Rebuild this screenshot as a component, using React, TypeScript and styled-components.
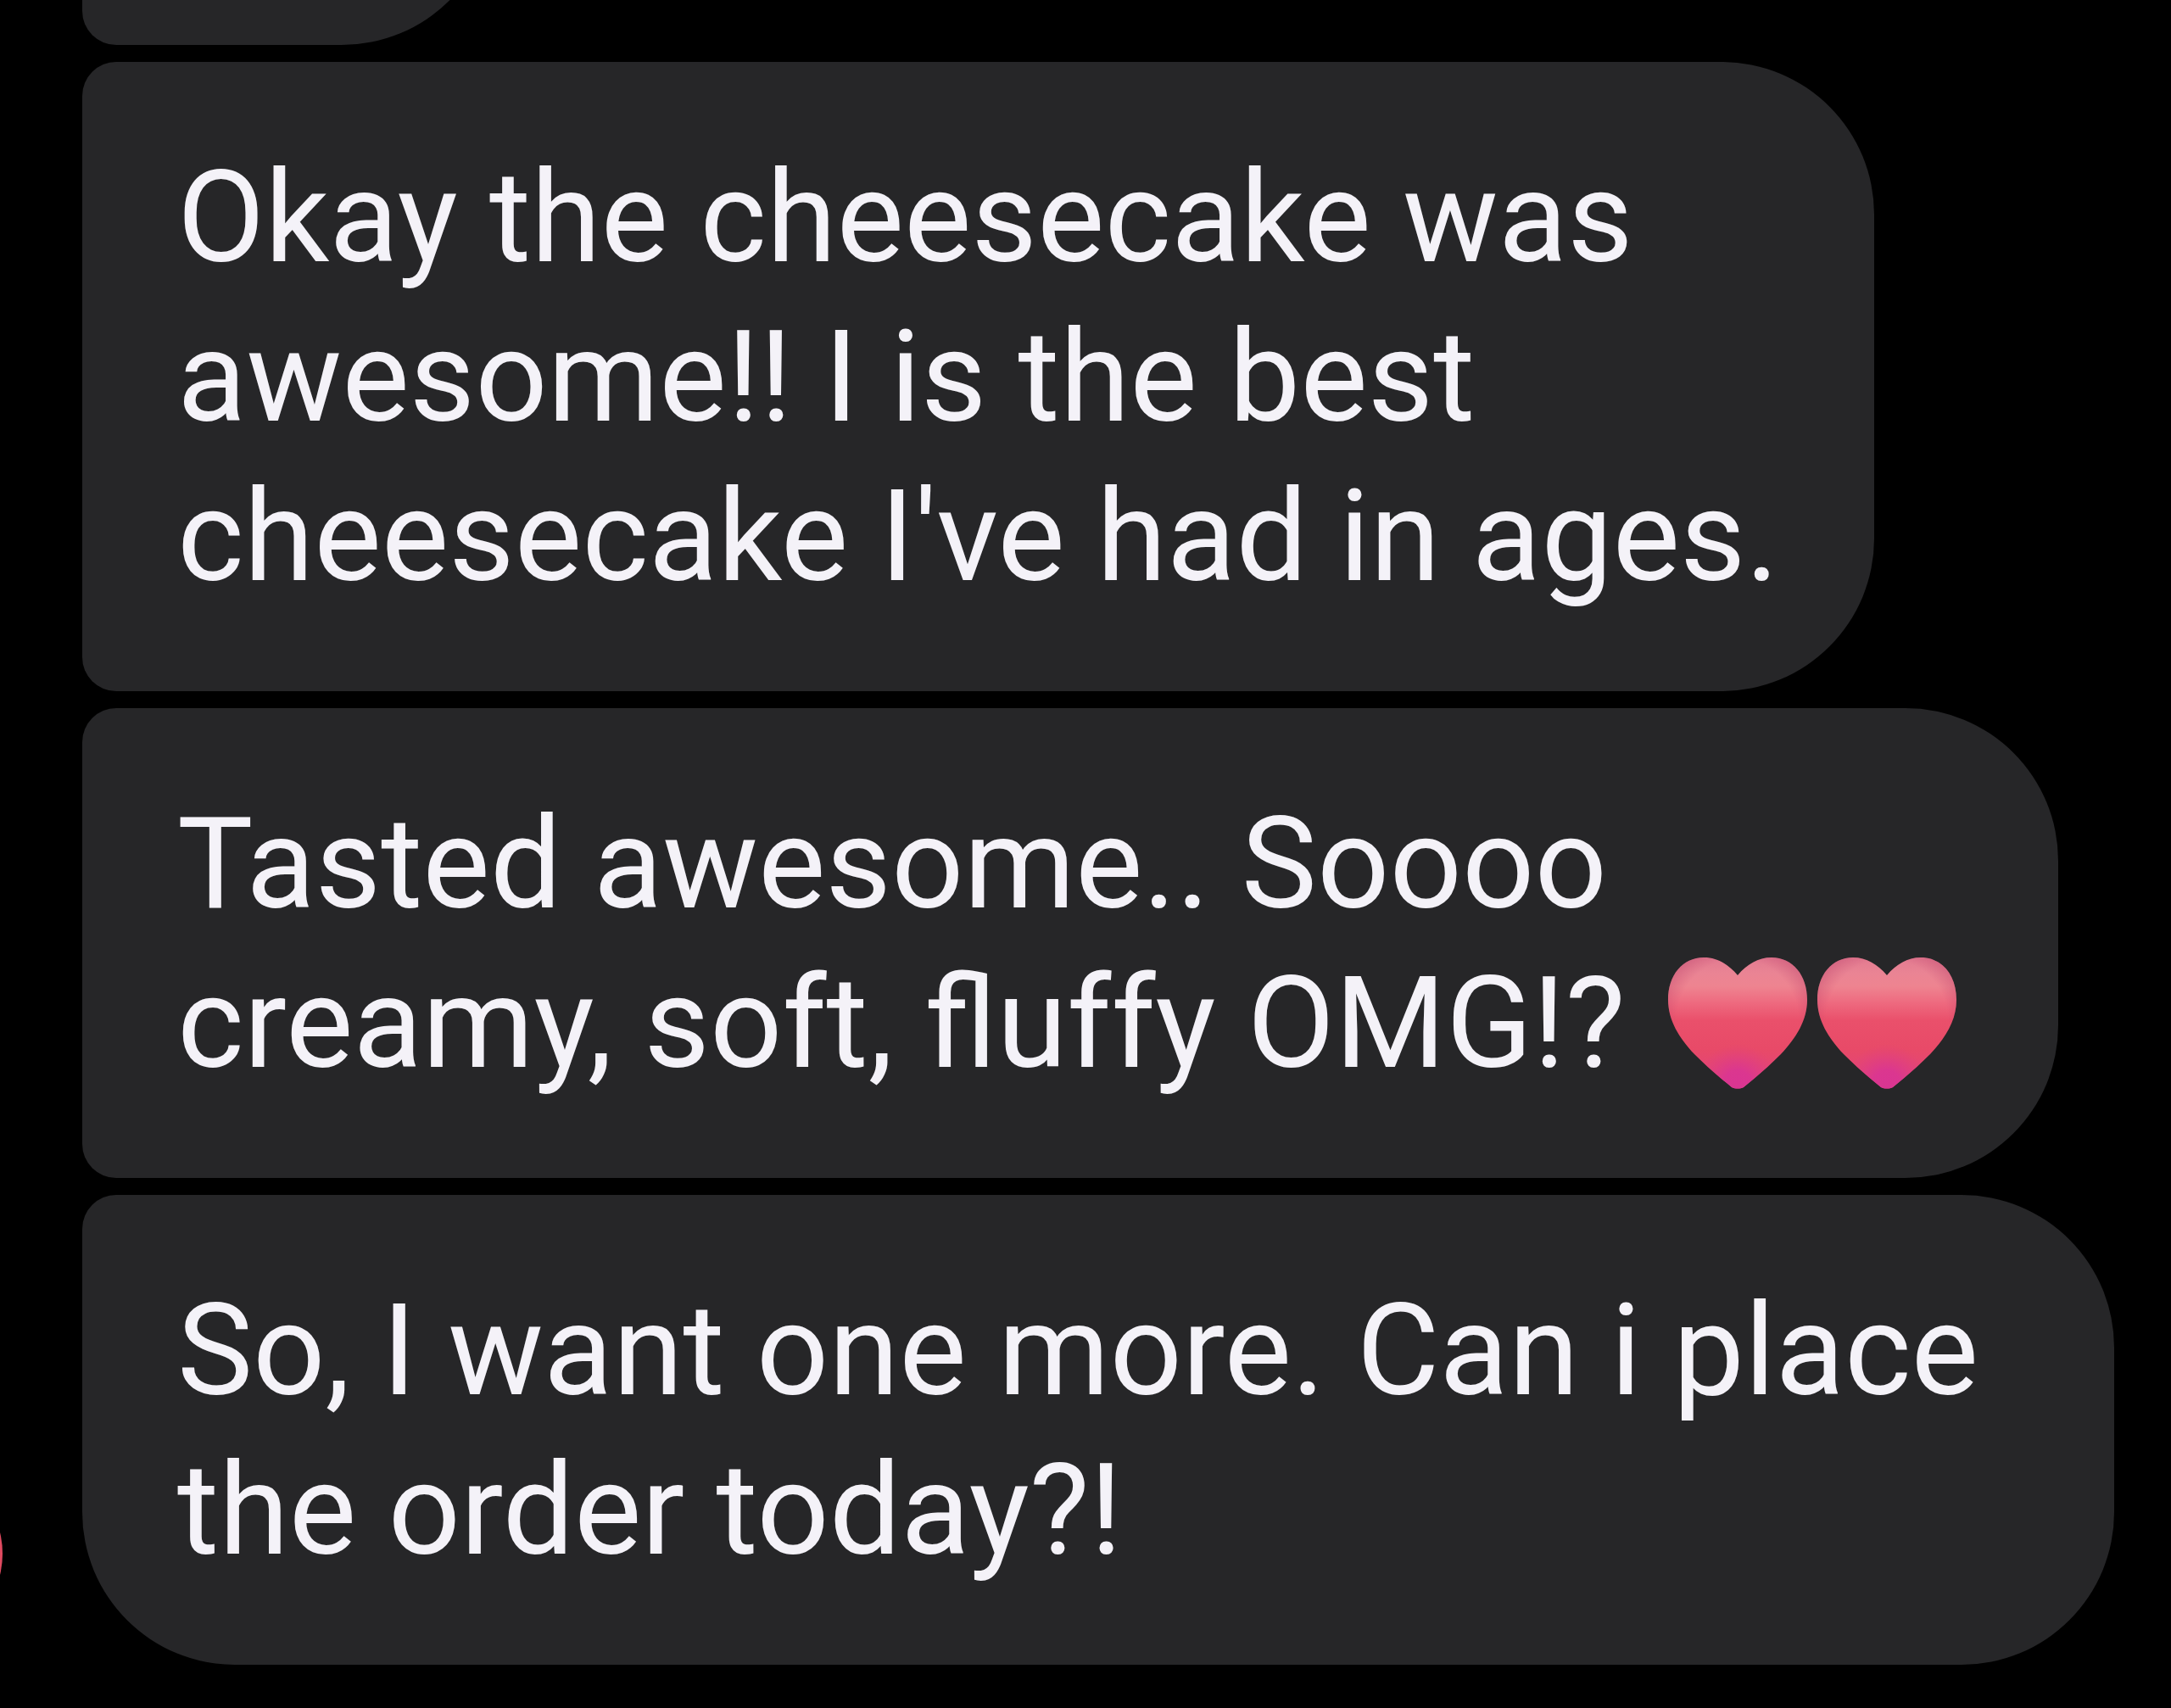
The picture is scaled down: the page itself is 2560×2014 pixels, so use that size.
import React from "react";
import styled, { createGlobalStyle } from "styled-components";

const GlobalStyle = createGlobalStyle`
  *, *::before, *::after { box-sizing: border-box; }
  html, body { margin: 0; background: #000; }
`;

const Thread = styled.main`
  position: relative;
  display: flex;
  flex-direction: column;
  justify-content: flex-end;
  align-items: flex-start;
  gap: 20px;
  height: 100vh;
  padding: 0 52px 51px 97px;
  overflow: hidden;
  background: #000;
  color: #f4f2f8;
  font-family: Roboto, "Liberation Sans", sans-serif;
  font-size: 150px;
  line-height: 188px;
`;

const Bubble = styled.article<{ $last?: boolean; $minWidth?: number }>`
  flex: none;
  max-width: 100%;
  min-width: ${(p) => p.$minWidth ?? 486}px;
  padding: 90px 112px 88px;
  border-radius: 40px 180px 180px ${(p) => (p.$last ? "180px" : "40px")};
  background: #262628;
`;

const Message = styled.p`
  margin: 0;
  min-height: 188px;
  white-space: break-spaces;
`;

const Emoji = styled.span`
  margin-left: 7px;
  white-space: nowrap;
`;

const HeartIcon = styled.svg`
  display: inline-block;
  width: 176px;
  height: 156px;
  vertical-align: -27px;
`;

const Avatar = styled.span`
  position: absolute;
  left: -209px;
  bottom: 76px;
  width: 212px;
  height: 212px;
  border-radius: 50%;
  background: #e04a60;
`;

const heartPath =
  "M88 21 C99 8 112 0 128 0 C153 0 170 21 170 50 C170 74 157 95 139 114 C125 128 110 141 95 153 C91 155 85 155 81 153 C66 141 51 128 37 114 C19 95 6 74 6 50 C6 21 23 0 48 0 C64 0 77 8 88 21 Z";

function Heart({ id }: { id: string }) {
  return (
    <HeartIcon viewBox="0 0 176 156" role="img" aria-label="heart">
      <defs>
        <linearGradient id={`${id}-fill`} x1="0" y1="0" x2="0" y2="1">
          <stop offset="0" stopColor="#e27a90" />
          <stop offset="0.12" stopColor="#ea8494" />
          <stop offset="0.22" stopColor="#ee8490" />
          <stop offset="0.34" stopColor="#ee6b80" />
          <stop offset="0.48" stopColor="#ea506b" />
          <stop offset="0.7" stopColor="#e84a68" />
          <stop offset="1" stopColor="#e04080" />
        </linearGradient>
        <radialGradient id={`${id}-tip`} gradientUnits="userSpaceOnUse" cx="88" cy="150" r="48">
          <stop offset="0" stopColor="#da3592" />
          <stop offset="0.35" stopColor="#da3592" stopOpacity="0.9" />
          <stop offset="1" stopColor="#e04080" stopOpacity="0" />
        </radialGradient>
        <radialGradient id={`${id}-edge`} gradientUnits="userSpaceOnUse" cx="88" cy="74" r="100">
          <stop offset="0.72" stopColor="#b83c66" stopOpacity="0" />
          <stop offset="1" stopColor="#b83c66" stopOpacity="0.5" />
        </radialGradient>
      </defs>
      <path d={heartPath} fill={`url(#${id}-fill)`} />
      <path d={heartPath} fill={`url(#${id}-edge)`} />
      <path d={heartPath} fill={`url(#${id}-tip)`} />
    </HeartIcon>
  );
}

export default function App() {
  return (
    <>
      <GlobalStyle />
      <Thread>
        <Avatar aria-hidden="true" />
        <Bubble aria-hidden="true">
          <Message />
        </Bubble>
        <Bubble>
          <Message>{"Okay the cheesecake was\nawesome!! I is the best\ncheesecake I've had in ages."}</Message>
        </Bubble>
        <Bubble $minWidth={2330}>
          <Message>
            {"Tasted awesome.. Soooo\ncreamy, soft, fluffy OMG!? "}
            <Emoji>
              <Heart id="heart-a" />
              <Heart id="heart-b" />
            </Emoji>
          </Message>
        </Bubble>
        <Bubble $last $minWidth={2396}>
          <Message>{"So, I want one more. Can i place\nthe order today?!"}</Message>
        </Bubble>
      </Thread>
    </>
  );
}
